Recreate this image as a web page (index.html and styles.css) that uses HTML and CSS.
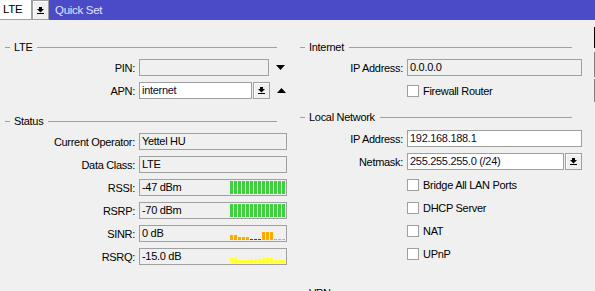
FILE: index.html
```html
<!DOCTYPE html>
<html lang="en">
<head>
    <meta charset="UTF-8">
    <meta name="viewport" content="width=device-width, initial-scale=1.0">
    <title>Quick Set</title>
    <link rel="stylesheet" href="styles.css">
</head>
<body>
    <div class="titlebar">
        <div class="mode">LTE</div>
        <div class="drop-btn">
            <svg width="7" height="7" viewBox="0 0 7 7"><rect x="2" y="0" width="3" height="2"/><polygon points="0,2 7,2 3.5,5.5"/><rect x="0" y="6" width="7" height="1"/></svg>
        </div>
        <div class="title">Quick Set</div>
    </div>

    <div class="main">
        <div class="col col-left">
            <!-- LTE -->
            <div class="section">
                <div class="legend">LTE</div>
                <div class="row">
                    <label>PIN:</label>
                    <div class="field pin"></div>
                    <svg class="arrow" width="9" height="5" viewBox="0 0 9 5"><polygon points="0,0 9,0 4.5,5"/></svg>
                </div>
                <div class="row">
                    <label>APN:</label>
                    <div class="field edit apn">internet</div>
                    <div class="drop-btn small">
                        <svg width="7" height="7" viewBox="0 0 7 7"><rect x="2" y="0" width="3" height="2"/><polygon points="0,2 7,2 3.5,5.5"/><rect x="0" y="6" width="7" height="1"/></svg>
                    </div>
                    <svg class="arrow" width="9" height="5" viewBox="0 0 9 5"><polygon points="0,5 9,5 4.5,0"/></svg>
                </div>
            </div>

            <!-- Status -->
            <div class="section status">
                <div class="legend">Status</div>
                <div class="row">
                    <label>Current Operator:</label>
                    <div class="field wide">Yettel HU</div>
                </div>
                <div class="row">
                    <label>Data Class:</label>
                    <div class="field wide">LTE</div>
                </div>
                <div class="row">
                    <label>RSSI:</label>
                    <div class="field wide signal"><span>-47 dBm</span><div class="bars" data-color="#3fcf3f" data-levels="13,13,13,13,13,13,13,13,13,13,13,13,13,13"></div></div>
                </div>
                <div class="row">
                    <label>RSRP:</label>
                    <div class="field wide signal"><span>-70 dBm</span><div class="bars" data-color="#3fcf3f" data-levels="13,13,13,13,13,13,13,13,13,13,13,13,13,13"></div></div>
                </div>
                <div class="row">
                    <label>SINR:</label>
                    <div class="field wide signal"><span>0 dB</span><div class="bars" data-color="#ffaa00" data-levels="5,5,3,3,3,1r,1r,1r,8,8,8,1,1,1"></div></div>
                </div>
                <div class="row">
                    <label>RSRQ:</label>
                    <div class="field wide signal"><span>-15.0 dB</span><div class="bars" data-color="#ffff3c" data-levels="5,5,3,3,3,4,4,4,5,5,5,3,3,3"></div></div>
                </div>
            </div>
        </div>

        <div class="col col-right">
            <!-- Internet -->
            <div class="section">
                <div class="legend">Internet</div>
                <div class="row">
                    <label>IP Address:</label>
                    <div class="field wide">0.0.0.0</div>
                </div>
                <div class="row">
                    <label></label>
                    <span class="check"></span><span>Firewall Router</span>
                </div>
            </div>

            <!-- Local Network -->
            <div class="section local">
                <div class="legend">Local Network</div>
                <div class="row">
                    <label>IP Address:</label>
                    <div class="field edit wide">192.168.188.1</div>
                </div>
                <div class="row">
                    <label>Netmask:</label>
                    <div class="field edit mask">255.255.255.0 (/24)</div>
                    <div class="drop-btn small">
                        <svg width="7" height="7" viewBox="0 0 7 7"><rect x="2" y="0" width="3" height="2"/><polygon points="0,2 7,2 3.5,5.5"/><rect x="0" y="6" width="7" height="1"/></svg>
                    </div>
                </div>
                <div class="row">
                    <label></label>
                    <span class="check"></span><span>Bridge All LAN Ports</span>
                </div>
                <div class="row">
                    <label></label>
                    <span class="check"></span><span>DHCP Server</span>
                </div>
                <div class="row">
                    <label></label>
                    <span class="check"></span><span>NAT</span>
                </div>
                <div class="row">
                    <label></label>
                    <span class="check"></span><span>UPnP</span>
                </div>
            </div>

            <!-- VPN -->
            <div class="section vpn">
                <div class="legend">VPN</div>
            </div>
        </div>

        <div class="edge">
            <div class="edge-dark"></div>
            <div class="edge-gray"></div>
            <div class="edge-gray second"></div>
        </div>
    </div>

    <script>
        // Desenha as barras de sinal a partir dos niveis
        document.querySelectorAll('.bars').forEach(function (bars) {
            const color = bars.dataset.color;
            bars.dataset.levels.split(',').forEach(function (level) {
                const bar = document.createElement('div');
                bar.className = 'bar';
                bar.style.height = parseInt(level) + 'px';
                bar.style.background = level.endsWith('r') ? '#ee0000' : color;
                bars.appendChild(bar);
            });
        });
    </script>
</body>
</html>
```

FILE: styles.css
```css
body {
    margin: 0;
    width: 595px;
    height: 291px;
    overflow: hidden;
    background-color: #f0f0f0;
    color: #000;
    font-family: "Liberation Sans", Arial, sans-serif;
    font-size: 11px;
    letter-spacing: -0.3px;
}

.titlebar {
    display: flex;
    height: 20px;
    background-color: #4b4bc8;
}

.mode {
    width: 32px;
    height: 20px;
    box-sizing: border-box;
    padding-left: 3px;
    line-height: 19px;
    background-color: #fff;
    border-right: 1px solid #a0a0a0;
    border-bottom: 1px solid #a0a0a0;
    font-size: 11.5px;
}

.drop-btn {
    width: 17px;
    height: 20px;
    box-sizing: border-box;
    display: flex;
    align-items: center;
    justify-content: center;
    background-color: #f0f0f0;
    border: 1px solid #a0a0a0;
    box-shadow: inset 1px 1px 0 #fff;
}

.drop-btn.small {
    width: 17px;
    height: 17px;
    margin-left: 1px;
}

.title {
    margin-left: 6px;
    line-height: 20px;
    color: #e2e2ff;
    font-size: 11.5px;
}

.main {
    display: flex;
}

.col {
    padding-top: 20px;
}

.col-left {
    width: 295px;
}

.col-right {
    width: 299px;
}

.legend {
    display: flex;
    align-items: center;
    width: 277px;
    height: 14px;
    box-sizing: border-box;
    padding-left: 5px;
    margin-bottom: 5px;
}

.legend::before {
    content: "";
    width: 5px;
    height: 1px;
    margin-right: 4px;
    background-color: #a0a0a0;
}

.legend::after {
    content: "";
    flex: 1;
    height: 1px;
    margin-left: 5px;
    background-color: #a0a0a0;
}

.status {
    margin-top: 15px;
}

.local {
    margin-top: 11px;
}

.local .legend {
    margin-bottom: 6px;
}

.vpn {
    margin-top: 24px;
}

.row {
    display: flex;
    align-items: center;
    height: 17px;
    margin-bottom: 6px;
}

.row label {
    width: 135px;
    margin-right: 4px;
    text-align: right;
}

.col-right .row label {
    width: 108px;
}

.field {
    height: 17px;
    box-sizing: border-box;
    padding: 0 2px;
    line-height: 15px;
    border: 1px solid #a0a0a0;
    background-color: #f0f0f0;
    white-space: nowrap;
}

.field.edit {
    background-color: #fff;
    color: #0a0a30;
}

.pin {
    width: 130px;
}

.apn {
    width: 113px;
}

.col-left .wide {
    width: 148px;
}

.col-right .wide {
    width: 175px;
}

.mask {
    width: 157px;
}

.arrow {
    margin-left: 7px;
}

.signal {
    display: flex;
    justify-content: space-between;
}

.bars {
    display: flex;
    align-items: flex-end;
    align-self: flex-end;
    gap: 1px;
    height: 13px;
    margin-bottom: 1px;
    margin-right: -1px;
}

.bar {
    width: 3px;
}

.check {
    width: 12px;
    height: 12px;
    box-sizing: border-box;
    margin-right: 4px;
    border: 1px solid #a0a0a0;
    background-color: #fff;
}

.edge {
    width: 1px;
    padding-top: 7px;
}

.edge-dark {
    height: 21px;
    background-color: #000;
}

.edge-gray {
    height: 25px;
    margin-top: 4px;
    background-color: #808080;
}

.edge-gray.second {
    height: 23px;
    margin-top: 2px;
}
```
